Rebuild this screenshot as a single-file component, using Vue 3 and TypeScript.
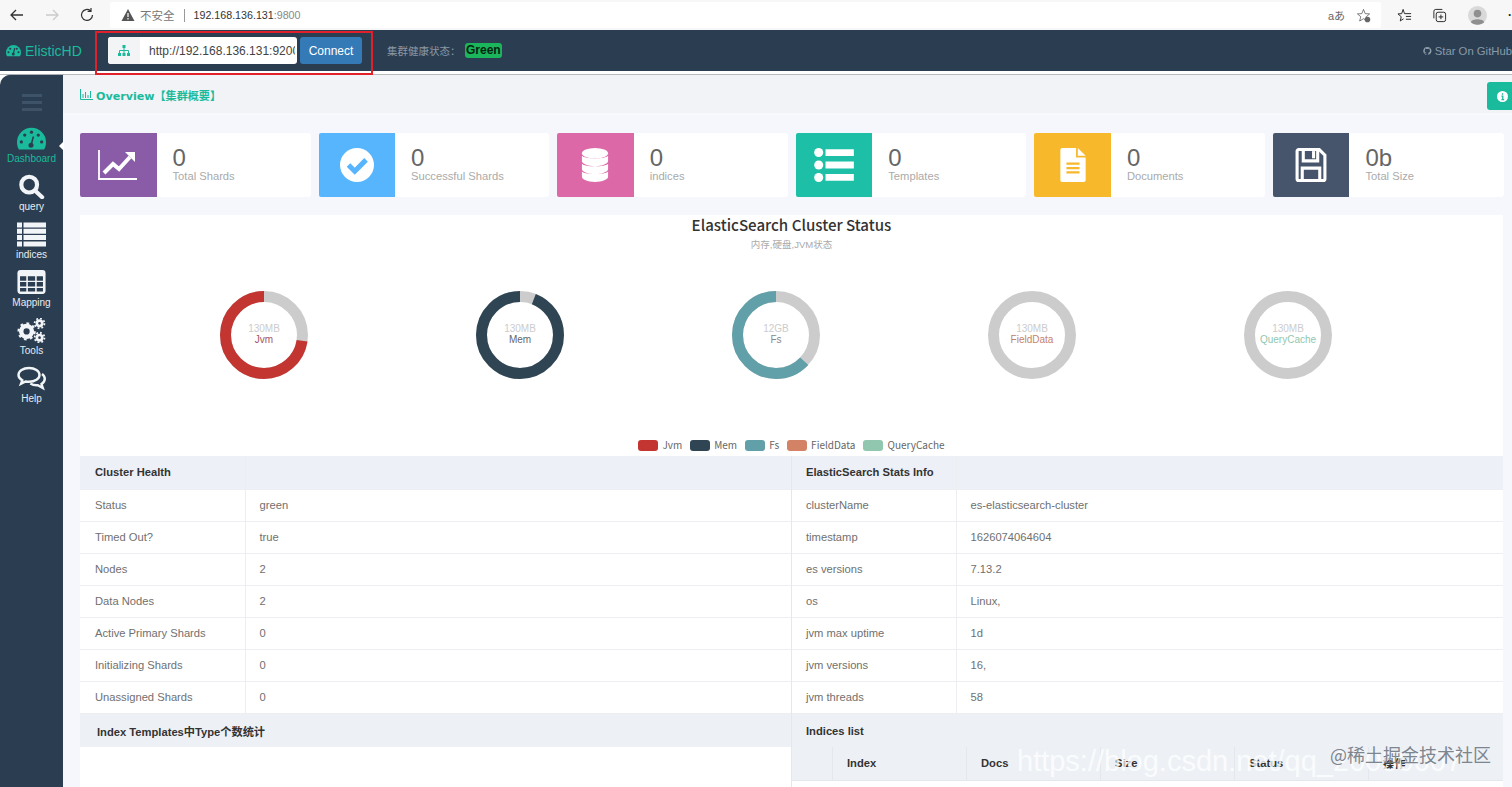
<script setup lang="ts">
const stats = [
  { value: '0', label: 'Total Shards', color: '#8a5ca8', icon: 'chart' },
  { value: '0', label: 'Successful Shards', color: '#57b5fd', icon: 'check' },
  { value: '0', label: 'indices', color: '#dc68a8', icon: 'db' },
  { value: '0', label: 'Templates', color: '#1dbfa6', icon: 'list' },
  { value: '0', label: 'Documents', color: '#f8b82c', icon: 'file' },
  { value: '0b', label: 'Total Size', color: '#46556b', icon: 'save' }
]

const R = 38.5
const C = 2 * Math.PI * R
const donuts = [
  { size: '130MB', name: 'Jvm', color: '#c23531', used: 0.725, nameColor: '#a5565e' },
  { size: '130MB', name: 'Mem', color: '#2f4554', used: 0.94, nameColor: '#666' },
  { size: '12GB', name: 'Fs', color: '#61a0a8', used: 0.63, nameColor: '#888' },
  { size: '130MB', name: 'FieldData', color: '#d48265', used: 0, nameColor: '#c5826a' },
  { size: '130MB', name: 'QueryCache', color: '#91c7ae', used: 0, nameColor: '#91c7ae' }
]

const health = [
  ['Status', 'green'],
  ['Timed Out?', 'true'],
  ['Nodes', '2'],
  ['Data Nodes', '2'],
  ['Active Primary Shards', '0'],
  ['Initializing Shards', '0'],
  ['Unassigned Shards', '0']
]
const info = [
  ['clusterName', 'es-elasticsearch-cluster'],
  ['timestamp', '1626074064604'],
  ['es versions', '7.13.2'],
  ['os', 'Linux,'],
  ['jvm max uptime', '1d'],
  ['jvm versions', '16,'],
  ['jvm threads', '58']
]
const menu = ['Dashboard', 'query', 'indices', 'Mapping', 'Tools', 'Help']
</script>

<template>
  <div class="page">
    <div class="browser">
      <svg class="b-ico" viewBox="0 0 16 16"><path d="M14 8H2M7 3 2 8l5 5" fill="none" stroke="#333" stroke-width="1.3" /></svg>
      <svg class="b-ico" viewBox="0 0 16 16"><path d="M2 8h12M9 3l5 5-5 5" fill="none" stroke="#ccc" stroke-width="1.3" /></svg>
      <svg class="b-ico" viewBox="0 0 16 16"><path d="M13.5 8A5.5 5.5 0 1 1 11.5 3.7M12 1v3.4H8.600" fill="none" stroke="#333" stroke-width="1.2" /></svg>
      <div class="address">
        <svg class="warn" viewBox="0 0 14 14"><path d="M7 1 13.500 13H.5Z" fill="#555" /><path d="M7 5v4M7 10v1.500" stroke="#fff" stroke-width="1.200" /></svg>
        <span class="unsafe">不安全</span>
        <span class="sep"></span>
        <span class="host">192.168.136.131<em>:9800</em></span>
        <span class="spacer"></span>
        <span class="aa">aあ</span>
        <svg class="b-small" viewBox="0 0 16 16"><path d="M8 1.500 9.800 6l4.700.3-3.600 3 1.200 4.600L8 11.400l-4.100 2.500 1.200-4.600-3.600-3L6.200 6Z" fill="none" stroke="#555" stroke-width=".8" /><circle cx="12.200" cy="12.200" r="3" fill="#666" /></svg>
      </div>
      <svg class="b-small star" viewBox="0 0 16 16"><path d="M6.500 1.500 8 6h7M9.500 9H15M9.500 12H15M6.500 1.500 5 6 1 6.300l3.500 3-1 4.500L7 11.500" fill="none" stroke="#222" stroke-width="1" /></svg>
      <svg class="b-small coll" viewBox="0 0 16 16"><rect x="4.500" y="4.500" width="10" height="10" rx="2" fill="none" stroke="#222" /><path d="M2 11V3.500A2 2 0 0 1 4 1.500h7M9.500 7v5M7 9.500h5" fill="none" stroke="#222" /></svg>
      <svg class="avatar" viewBox="0 0 20 20"><circle cx="10" cy="10" r="10" fill="#d9d9d9" /><circle cx="10" cy="8" r="4" fill="#8f8f8f" /><path d="M3 17c1-4 13-4 14 0-3 3.500-11 3.500-14 0Z" fill="#8f8f8f" /></svg>
      <span class="dots">··</span>
    </div>

    <nav class="navbar">
      <div class="brand">
        <svg class="brand-ico" viewBox="0 0 30 24"><path d="M15 1A15 15 0 0 0 0 16c0 3 .7 5.500 2 7.500h26c1.300-2 2-4.500 2-7.500A15 15 0 0 0 15 1Z" fill="#1abb9c" /><g fill="#2b3d51"><circle cx="5" cy="15.500" r="2.200" /><circle cx="8.500" cy="8.500" r="2.200" /><circle cx="21.500" cy="8.500" r="2.200" /><circle cx="25" cy="15.500" r="2.200" /><circle cx="14.500" cy="19" r="3" /></g><path d="M14.500 19 17.500 7" stroke="#2b3d51" stroke-width="2.200" /></svg>
        ElisticHD
      </div>
      <div class="input-group">
        <span class="addon">
          <svg viewBox="0 0 12 11"><path d="M4.500 0h3v3h-3ZM0 8h3v3H0ZM4.500 8h3v3h-3ZM9 8h3v3H9Z" fill="#1abb9c" /><path d="M6 3v5M1.500 8V5.500h9V8" fill="none" stroke="#1abb9c" /></svg>
        </span>
        <input class="url" value="http://192.168.136.131:9200" readonly />
      </div>
      <button class="connect">Connect</button>
      <span class="health-label">集群健康状态：</span>
      <span class="health-badge">Green</span>
      <span class="github">
        <svg viewBox="0 0 16 16"><path d="M8 .5a7.500 7.500 0 0 0-2.400 14.600c.4 0 .5-.2.500-.4v-1.300c-2 .4-2.500-1-2.500-1-.4-.8-.8-1-.8-1-.7-.5 0-.5 0-.5.700 0 1.100.8 1.100.8.700 1.100 1.700.8 2.100.6 0-.5.300-.8.500-1-1.700-.2-3.400-.8-3.400-3.700 0-.8.300-1.500.8-2-.1-.2-.3-1 0-2 0 0 .6-.2 2.100.8a7 7 0 0 1 3.800 0c1.500-1 2.100-.8 2.100-.8.300 1 .1 1.800 0 2 .5.500.8 1.200.8 2 0 2.900-1.700 3.500-3.400 3.700.3.200.5.700.5 1.400v2c0 .2.100.4.500.4A7.500 7.500 0 0 0 8 .5Z" fill="#8fa0ad" /></svg>
        Star On GitHub
      </span>
    </nav>
    <div class="strip"></div>

    <div class="shell">
      <aside class="sidebar">
        <div class="burger"><i></i><i></i><i></i></div>
        <a v-for="(m, i) in menu" :key="m" class="menu-item" :class="{ active: i === 0 }">
          <svg v-if="i === 0" viewBox="0 0 30 24"><path d="M15 1A15 15 0 0 0 0 16c0 3 .7 5.500 2 7.500h26c1.300-2 2-4.500 2-7.500A15 15 0 0 0 15 1Z" fill="#1abb9c" /><g fill="#2b3d51"><circle cx="4.500" cy="15.500" r="1.700" /><circle cx="8" cy="8.500" r="1.700" /><circle cx="15" cy="5.500" r="1.700" /><circle cx="22" cy="8.500" r="1.700" /><circle cx="25.500" cy="15.500" r="1.700" /><circle cx="14.500" cy="19" r="2.600" /></g><path d="M14.500 19 17 10" stroke="#2b3d51" stroke-width="1.600" /></svg>
          <svg v-else-if="i === 1" viewBox="0 0 28 27"><circle cx="11.500" cy="11.500" r="8.500" fill="none" stroke="#f2f5f7" stroke-width="4.500" /><path d="m18 18 7.500 7" stroke="#f2f5f7" stroke-width="4.500" stroke-linecap="round" /></svg>
          <svg v-else-if="i === 2" viewBox="0 0 29 24"><g fill="#f2f5f7"><path d="M0 0h5v5H0ZM6.500 0H29v5H6.500ZM0 6.300h5v5H0ZM6.500 6.300H29v5H6.500ZM0 12.600h5v5H0ZM6.500 12.600H29v5H6.500ZM0 19h5v5H0ZM6.500 19H29v5H6.500Z" /></g></svg>
          <svg v-else-if="i === 3" viewBox="0 0 27 24"><rect width="27" height="23" rx="3" fill="#f2f5f7" /><g fill="#2b3d51"><path d="M2.500 6h6v4.200h-6ZM10 6h7v4.200h-7ZM18.500 6h6v4.200h-6ZM2.500 11.600h6v4.200h-6ZM10 11.600h7v4.200h-7ZM18.500 11.600h6v4.200h-6ZM2.500 17.200h6v3.500h-6ZM10 17.200h7v3.500h-7ZM18.500 17.200h6v3.500h-6Z" /></g></svg>
          <svg v-else-if="i === 4" viewBox="0 0 32 28">
            <g fill="none" stroke="#f2f5f7">
              <circle cx="10.500" cy="15" r="6" stroke-width="5" /><circle cx="10.500" cy="15" r="9" stroke-width="2.500" stroke-dasharray="3 4" />
              <circle cx="25" cy="6" r="3" stroke-width="3" /><circle cx="25" cy="6" r="5.500" stroke-width="2" stroke-dasharray="2 2.300" />
              <circle cx="25" cy="22" r="3" stroke-width="3" /><circle cx="25" cy="22" r="5.500" stroke-width="2" stroke-dasharray="2 2.300" />
            </g>
          </svg>
          <svg v-else viewBox="0 0 29 24"><g fill="none" stroke="#f2f5f7" stroke-width="2.400"><path d="M12 1.500C6 1.500 1.500 4.700 1.500 8.500c0 2.200 1.500 4.100 3.800 5.400L4 17.300l4.600-2.300c1.100.2 2.300.3 3.400.3 6 0 10.500-3 10.500-6.800S18 1.500 12 1.500Z" /><path d="M25 7.500c1.800 1.300 2.800 3 2.800 4.800 0 2.100-1.300 3.900-3.300 5.200l1.300 4-5-2.800c-2.800.2-5.500-.4-7.500-1.700" /></g></svg>
          <span>{{ m }}</span>
        </a>
      </aside>

      <main class="main">
        <header class="title-bar">
          <svg viewBox="0 0 13 11"><path d="M.5 0v10.500H13M3 5v4M5.500 3v6M8 6v3M10.500 2v7" fill="none" stroke="#1abb9c" /></svg>
          <span>Overview【集群概要】</span>
          <span class="info-btn">
            <svg viewBox="0 0 12 12"><circle cx="6" cy="6" r="6" fill="#fff" /><path d="M6 2.500v1.500M4.800 5.500H6.300v3.500M4.800 9.300h3" fill="none" stroke="#1abb9c" stroke-width="1.400" /></svg>
          </span>
        </header>

        <section class="stats">
          <div v-for="s in stats" :key="s.label" class="stat">
            <div class="stat-icon" :style="{ background: s.color }">
              <svg v-if="s.icon === 'chart'" viewBox="0 0 40 30"><path d="M1 0v29h38" fill="none" stroke="#fff" stroke-width="1.800" /><path d="m6 23 9-9 6 5 11-12" fill="none" stroke="#fff" stroke-width="4" /><path d="M27 2h10v10Z" fill="#fff" /></svg>
              <svg v-else-if="s.icon === 'check'" viewBox="0 0 30 30"><circle cx="15" cy="15" r="15" fill="#fff" /><path d="m7.500 15 5.500 5.500 10-10" fill="none" stroke="#57b5fd" stroke-width="4.500" /></svg>
              <svg v-else-if="s.icon === 'db'" viewBox="0 0 30 39"><g fill="#fff"><ellipse cx="15" cy="6" rx="15" ry="6" /><path d="M0 9c3 4 27 4 30 0v6c0 3-6.500 6-15 6S0 18 0 15ZM0 18c3 4 27 4 30 0v6c0 3-6.500 6-15 6S0 27 0 24ZM0 27c3 4 27 4 30 0v6c0 3-6.500 6-15 6S0 36 0 33Z" /></g></svg>
              <svg v-else-if="s.icon === 'list'" viewBox="0 0 35 30"><g fill="#fff"><circle cx="4" cy="4" r="4" /><circle cx="4" cy="15" r="4" /><circle cx="4" cy="26" r="4" /><path d="M10 1h25v6H10ZM10 12h25v6H10ZM10 23h25v6H10Z" /></g></svg>
              <svg v-else-if="s.icon === 'file'" viewBox="0 0 29 39"><path d="M2 0h16v11h11v26a2 2 0 0 1-2 2H2a2 2 0 0 1-2-2V2a2 2 0 0 1 2-2Z" fill="#fff" /><path d="M20 0l9 9h-9Z" fill="#fff" /><path d="M7 18h15M7 23h15M7 28h15" stroke="#f8b82c" stroke-width="2.500" /></svg>
              <svg v-else viewBox="0 0 30 33"><g fill="none" stroke="#fff" stroke-width="3"><path d="M3 1.500h20l5.500 5.500v23a1.500 1.500 0 0 1-1.500 1.500H3A1.500 1.500 0 0 1 1.500 30V3A1.500 1.500 0 0 1 3 1.500Z" /><path d="M7.500 2v10.500h14V2" /><path d="M6.500 30.500V19.500h17v11" /></g><path d="M16 3h3v7h-3Z" fill="#fff" /></svg>
            </div>
            <div class="stat-text">
              <div class="stat-value">{{ s.value }}</div>
              <div class="stat-label">{{ s.label }}</div>
            </div>
          </div>
        </section>

        <section class="chart-card">
          <h2>ElasticSearch Cluster Status</h2>
          <p>内存,硬盘,JVM状态</p>
          <div class="donuts">
            <div v-for="d in donuts" :key="d.name" class="donut">
              <svg viewBox="0 0 90 90">
                <circle cx="45" cy="45" :r="R" fill="none" stroke="#ccc" stroke-width="11" />
                <circle
                  v-if="d.used > 0"
                  cx="45"
                  cy="45"
                  :r="R"
                  fill="none"
                  :stroke="d.color"
                  stroke-width="11"
                  :stroke-dasharray="`${d.used * C} ${C}`"
                  transform="rotate(-90 45 45) scale(1 -1) translate(0 -90)"
                />
              </svg>
              <div class="donut-text">
                <div class="donut-size">{{ d.size }}</div>
                <div :style="{ color: d.nameColor }">{{ d.name }}</div>
              </div>
            </div>
          </div>
          <div class="legend">
            <span v-for="d in donuts" :key="d.name" class="legend-item">
              <i :style="{ background: d.color }"></i>{{ d.name }}
            </span>
          </div>
        </section>

        <section class="tables">
          <div class="col">
            <table>
              <thead><tr><th>Cluster Health</th><th></th></tr></thead>
              <tbody>
                <tr v-for="r in health" :key="r[0]"><td>{{ r[0] }}</td><td>{{ r[1] }}</td></tr>
              </tbody>
            </table>
            <div class="sub-head templates">Index Templates中Type个数统计</div>
          </div>
          <div class="col">
            <table>
              <thead><tr><th>ElasticSearch Stats Info</th><th></th></tr></thead>
              <tbody>
                <tr v-for="r in info" :key="r[0]"><td>{{ r[0] }}</td><td>{{ r[1] }}</td></tr>
              </tbody>
            </table>
            <div class="sub-head">Indices list</div>
            <div class="indices-head">
              <span class="c0"></span>
              <span class="c1">Index</span>
              <span class="c2">Docs <b class="sort"></b></span>
              <span class="c3">Size <b class="sort"></b></span>
              <span class="c4">Status</span>
              <span class="c5">操作</span>
            </div>
          </div>
        </section>
      </main>
    </div>

    <!-- red annotation + watermarks lie over the screenshot -->
    <div class="annotation"></div>
    <div class="mark-url">https://blog.csdn.net/qq_20050007</div>
    <div class="mark-juejin">@稀土掘金技术社区</div>
  </div>
</template>

<style>
html, body {
  margin: 0;
  height: 100%;
  overflow: hidden;
}
</style>

<style scoped>
.page {
  position: relative;
  width: 1512px;
  height: 787px;
  overflow: hidden;
  background: #fff;
  font-family: "Liberation Sans", "Noto Sans CJK SC", sans-serif;
  font-size: 12px;
  color: #555;
}

.browser {
  height: 30px;
  display: flex;
  align-items: center;
  background: #f7f7f7;
  padding-left: 9px;
  margin-right: -4px;
}
.b-ico {
  width: 16px;
  height: 16px;
  margin-right: 19px;
}
.address {
  flex: 1;
  height: 26px;
  margin-left: -4px;
  margin-right: 16px;
  display: flex;
  align-items: center;
  padding-left: 11px;
  background: #fff;
  border-radius: 2px;
}
.warn {
  width: 14px;
  height: 14px;
  margin-right: 5px;
}
.unsafe {
  color: #777;
  font-size: 11.500px;
}
.sep {
  width: 1px;
  height: 13px;
  background: #999;
  margin: 0 9px;
}
.host {
  font-size: 10.700px;
  color: #333;
}
.host em {
  font-style: normal;
  color: #888;
}
.spacer {
  flex: 1;
}
.aa {
  font-size: 11px;
  color: #666;
  margin-right: 11px;
}
.b-small {
  width: 15px;
  height: 15px;
  margin-right: 10px;
}
.star {
  margin-right: 20px;
}
.coll {
  margin-right: 21px;
}
.avatar {
  width: 19px;
  height: 19px;
  margin-right: 21px;
}
.dots {
  color: #222;
  font-weight: 700;
}

.navbar {
  height: 41px;
  display: flex;
  align-items: center;
  background: #2b3d51;
  padding-left: 6px;
}
.brand {
  width: 102px;
  flex: none;
  display: flex;
  align-items: center;
  gap: 4px;
  color: #1abb9c;
  font-size: 14px;
}
.brand-ico {
  width: 15px;
  height: 13px;
}
.input-group {
  display: flex;
  height: 27px;
  width: 189px;
  flex: none;
  border-radius: 3px;
  overflow: hidden;
  background: #fff;
}
.addon {
  width: 32px;
  flex: none;
  display: flex;
  align-items: center;
  justify-content: center;
  background: #f3f4f5;
}
.addon svg {
  width: 12px;
  height: 11px;
}
.url {
  width: 146px;
  margin-left: 9px;
  padding: 0;
  border: 0;
  outline: 0;
  font: 12px "Liberation Sans", sans-serif;
  color: #444;
  background: transparent;
}
.connect {
  width: 62px;
  height: 27px;
  flex: none;
  margin-left: 3px;
  padding: 0;
  border: 0;
  border-radius: 3px;
  background: #337ab7;
  color: #fff;
  font: 12px "Liberation Sans", sans-serif;
}
.health-label {
  margin-left: 25px;
  color: #8a98a5;
  font-size: 10.500px;
  width: 78px;
  flex: none;
  white-space: nowrap;
}
.health-badge {
  background: #1bb55c;
  color: #05240f;
  font-weight: 700;
  font-size: 12px;
  padding: 0 1px;
  border-radius: 3px;
  line-height: 15px;
}
.github {
  margin-left: auto;
  display: flex;
  align-items: center;
  gap: 3px;
  color: #8a9aa8;
  font-size: 11.300px;
  white-space: nowrap;
  width: 89px;
  flex: none;
}
.github svg {
  width: 10px;
  height: 10px;
}

.strip {
  height: 4px;
  background: linear-gradient(#fff 0 3px, #b9bcbf 3px);
}

.shell {
  display: flex;
  height: 712px;
}

.sidebar {
  width: 63px;
  flex: none;
  background: #2b3d51;
  border-top-left-radius: 10px;
  box-shadow: 1px 0 1px #1f2f40;
}
.burger {
  height: 47px;
  display: flex;
  flex-direction: column;
  justify-content: center;
  align-items: center;
  gap: 4px;
  padding-top: 8px;
  box-sizing: border-box;
}
.burger i {
  width: 20px;
  height: 3px;
  background: #3e5368;
}
.menu-item {
  position: relative;
  height: 48px;
  display: flex;
  flex-direction: column;
  align-items: center;
  color: #e8ecef;
  font-size: 10px;
  line-height: 12px;
  padding-top: 4px;
  box-sizing: border-box;
}
.menu-item svg {
  width: 29px;
  height: 25px;
  margin-bottom: 2px;
}
.menu-item.active {
  color: #1abb9c;
  padding-top: 4px;
}
.menu-item.active::after {
  content: "";
  position: absolute;
  right: -1px;
  top: 19px;
  border: 5px solid transparent;
  border-right-color: #fff;
  border-left-width: 0;
}

.main {
  flex: 1;
  min-width: 0;
  background: #f5f7fc;
  padding-right: 9px;
}

.title-bar {
  position: relative;
  height: 40px;
  margin-right: -9px;
  display: flex;
  align-items: center;
  gap: 3px;
  padding: 1px 0 0 17px;
  background: #f1f3f7;
  border-bottom: 2px solid #f8f9fc;
  box-sizing: border-box;
  color: #1abb9c;
  font-family: "DejaVu Sans", "Noto Sans CJK SC", sans-serif;
  font-weight: 700;
  font-size: 11.100px;
}
.title-bar svg {
  width: 13px;
  height: 11px;
}
.info-btn {
  position: absolute;
  right: 0;
  top: 7px;
  width: 25px;
  height: 28px;
  display: flex;
  align-items: center;
  padding-left: 10px;
  box-sizing: border-box;
  background: #1abb9c;
  border-radius: 3px 0 0 3px;
}
.info-btn svg {
  width: 11px;
  height: 11px;
}

.stats {
  display: grid;
  grid-template-columns: repeat(6, 230.600px);
  column-gap: 8px;
  margin: 18px 0 18px 17px;
}
.stat {
  display: flex;
  height: 64px;
  background: #fff;
  border-radius: 3px;
}
.stat-icon {
  width: 76.500px;
  flex: none;
  display: flex;
  align-items: center;
  justify-content: center;
  border-radius: 2px 0 0 2px;
}
.stat-icon svg {
  width: 40px;
  height: 34px;
}
.stat-text {
  padding: 13px 0 0 16px;
}
.stat-value {
  font-size: 24px;
  line-height: 24px;
  color: #666;
}
.stat-label {
  font-size: 11.200px;
  line-height: 13px;
  color: #aaa;
}

.chart-card {
  margin-left: 17px;
  height: 241px;
  background: #fff;
  text-align: center;
  box-sizing: border-box;
}
.chart-card h2 {
  margin: 0;
  font-family: "Noto Sans CJK SC", sans-serif;
  font-size: 15.100px;
  line-height: 18px;
  font-weight: 500;
  color: #333;
}
.chart-card p {
  margin: 5px 0 0;
  font-size: 9.500px;
  line-height: 14px;
  color: #aaa;
}
.donuts {
  display: flex;
  padding-left: 56px;
  margin-top: 38px;
}
.donut {
  position: relative;
  width: 256px;
  height: 90px;
}
.donut svg {
  width: 90px;
  height: 90px;
}
.donut-text {
  position: absolute;
  left: 0;
  right: 0;
  top: 34px;
  font-size: 10px;
  line-height: 10.500px;
}
.donut-size {
  color: #ccc;
}
.legend {
  display: flex;
  justify-content: center;
  gap: 8px;
  margin-top: 58px;
  font-family: "Noto Sans CJK SC", sans-serif;
  font-size: 10px;
  line-height: 14px;
  color: #666;
}
.legend-item {
  display: flex;
  align-items: center;
  gap: 4px;
}
.legend-item i {
  width: 20px;
  height: 11px;
  border-radius: 3px;
}

.tables {
  display: grid;
  grid-template-columns: 711px 712px;
  margin-left: 17px;
}
.col {
  background: #fff;
  min-height: 331px;
}
.col + .col {
  border-left: 1px solid #e4e7ec;
}
table {
  width: 100%;
  table-layout: fixed;
  border-collapse: collapse;
}
th, td {
  height: 32px;
  padding: 0 0 0 14px;
  box-sizing: border-box;
  font-size: 11.200px;
  text-align: left;
  border: 1px solid #eceef1;
  border-width: 0 0 1px 1px;
}
th {
  height: 33px;
  font-weight: 700;
  color: #333;
  background: #edf0f6;
}
td {
  color: #707070;
  background: #fff;
}
th:first-child, td:first-child {
  width: 165px;
  border-left: 0;
  padding-left: 15px;
}
.col + .col th:first-child, .col + .col td:first-child {
  width: 164px;
  padding-left: 14px;
}
.sub-head {
  height: 33px;
  display: flex;
  align-items: center;
  padding: 2px 0 0 14px;
  box-sizing: border-box;
  background: #edf1f6;
  font-weight: 700;
  font-size: 11.200px;
  color: #333;
}
.templates {
  padding-left: 17px;
}
.indices-head {
  height: 33px;
  display: flex;
  align-items: center;
  background: #edf1f6;
  border-bottom: 1px solid #e4e7ec;
  font-weight: 700;
  font-size: 11.200px;
  color: #333;
}
.indices-head span {
  height: 100%;
  display: flex;
  align-items: center;
  gap: 4px;
  box-sizing: border-box;
  border-left: 1px solid #e4e7ec;
  flex: none;
}
.c0 { width: 40px; border-left: 0 !important; }
.c1 { width: 134px; padding-left: 14px; }
.c2 { width: 134px; padding-left: 14px; }
.c3 { width: 134px; padding-left: 14px; }
.c4 { width: 134px; padding-left: 14px; }
.c5 { padding-left: 14px; }
.sort {
  width: 0;
  height: 9px;
  border-left: 3px solid transparent;
  border-right: 3px solid transparent;
  background: linear-gradient(#9aa5ae 0 4px, transparent 4px 5px, #9aa5ae 5px);
}

.annotation {
  position: absolute;
  left: 95px;
  top: 31px;
  width: 278px;
  height: 44px;
  box-sizing: border-box;
  border: 2px solid #e0202a;
  pointer-events: none;
}
.mark-url {
  position: absolute;
  left: 1017px;
  top: 745px;
  font-family: "Liberation Sans", sans-serif;
  font-size: 29px;
  line-height: 32px;
  color: rgba(255, 255, 255, 0.75);
  white-space: nowrap;
}
.mark-juejin {
  position: absolute;
  left: 1330px;
  top: 743px;
  font-family: "Noto Sans CJK SC", sans-serif;
  font-size: 18px;
  line-height: 22px;
  color: #7d858e;
  white-space: nowrap;
}
</style>
